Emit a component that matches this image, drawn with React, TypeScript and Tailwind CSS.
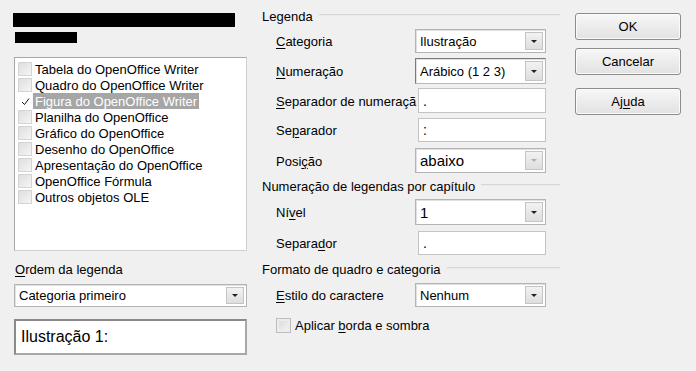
import React from "react";

const font = "font-['Liberation_Sans',Arial,sans-serif]";

function Mn({ children }: { children: React.ReactNode }) {
  return <span className="underline underline-offset-[2px] decoration-[1px]">{children}</span>;
}

function Box() {
  return (
    <span className="w-[14px] h-[14px] shrink-0 border border-[#d4d4d4] bg-gradient-to-br from-[#dedede] to-[#f6f6f6]" />
  );
}

function Arrow({ disabled }: { disabled?: boolean }) {
  return (
    <span className="w-[18px] self-stretch m-[2px] ml-0 flex items-center justify-center border border-[#c4c4c4] bg-gradient-to-b from-[#f2f2f2] to-[#dedede]">
      <span
        className={`w-0 h-0 border-l-[3px] border-r-[3px] border-t-[3px] border-l-transparent border-r-transparent ${
          disabled ? "border-t-[#b0b0b0]" : "border-t-[#202020]"
        }`}
      />
    </span>
  );
}

function Select({
  value,
  h = "h-[24px]",
  w = "w-[131px]",
  size = "text-[13px]",
  disabled,
  focus,
}: {
  value: string;
  h?: string;
  w?: string;
  size?: string;
  disabled?: boolean;
  focus?: boolean;
}) {
  return (
    <div
      className={`${w} ${h} flex items-stretch bg-white border ${
        focus ? "border-[#7a7a7a] border-b-[#b8b8b8] border-r-[#b8b8b8]" : "border-[#b4b4b4]"
      } shadow-[inset_1px_1px_0_#e0e0e0]`}
    >
      <span className={`flex-1 flex items-center pl-[4px] ${size} leading-none text-black whitespace-nowrap overflow-hidden`}>
        {value}
      </span>
      <Arrow disabled={disabled} />
    </div>
  );
}

function Input({ value, h = "h-[24px]" }: { value: string; h?: string }) {
  return (
    <div className={`ml-[3px] w-[128px] ${h} flex items-center pl-[4px] bg-white border border-[#c4c4c4] text-[14px] leading-none`}>
      {value}
    </div>
  );
}

function Header({ children }: { children: React.ReactNode }) {
  return (
    <div className="flex items-center h-[16px]">
      <span className="text-[13px] leading-none whitespace-nowrap">{children}</span>
      <span className="flex-1 ml-[6px] h-[2px] bg-[#d6d6d6] border-b border-b-[#ececec] -mt-[2px]" />
    </div>
  );
}

function Row({
  label,
  children,
  mt,
  h,
}: {
  label: React.ReactNode;
  children: React.ReactNode;
  mt: string;
  h: string;
}) {
  return (
    <div className={`${mt} ${h} flex items-center pl-[14px]`}>
      <span className="w-[139px] shrink-0 whitespace-nowrap text-[13px] leading-[16px] pt-[2px]">
        {label}
      </span>
      {children}
    </div>
  );
}

const items = [
  "Tabela do OpenOffice Writer",
  "Quadro do OpenOffice Writer",
  "Figura do OpenOffice Writer",
  "Planilha do OpenOffice",
  "Gráfico do OpenOffice",
  "Desenho do OpenOffice",
  "Apresentação do OpenOffice",
  "OpenOffice Fórmula",
  "Outros objetos OLE",
];

function Button({ children, mt }: { children: React.ReactNode; mt: string }) {
  return (
    <div
      className={`${mt} w-[106px] h-[27px] flex items-center justify-center rounded-[3px] border border-[#8c8c8c] bg-gradient-to-b from-[#f7f7f7] to-[#e2e2e2] shadow-[inset_0_0_0_1px_#fbfbfb] text-[13px] leading-none`}
    >
      {children}
    </div>
  );
}

export default function App() {
  return (
    <div className={`${font} w-[696px] h-[371px] bg-[#f0f0f0] text-black flex overflow-hidden`}>
      {/* left column */}
      <div className="w-[234px] ml-[13px] pt-[13px] flex flex-col shrink-0">
        <div className="w-[222px] h-[14px] bg-black" />
        <div className="mt-[5px] ml-[2px] w-[62px] h-[11px] bg-black" />
        <div className="mt-[14px] ml-[1px] w-[233px] h-[194px] bg-white border border-[#a8a8a8] border-r-[#d0d0d0] border-b-[#d0d0d0] pt-[3px]">
          {items.map((it, i) => (
            <div key={it} className="h-[16px] flex items-center pl-[3px]">
              {i === 2 ? (
                <span className="w-[14px] h-[14px] shrink-0 flex items-center justify-center">
                  <svg width="9" height="9" viewBox="0 0 9 9">
                    <path d="M1 5 L3.5 7.5 L8 1.5" fill="none" stroke="#111" strokeWidth="1" />
                  </svg>
                </span>
              ) : (
                <Box />
              )}
              <span
                className={`ml-[1px] px-[2px] h-[16px] flex items-center text-[13px] leading-none whitespace-nowrap ${
                  i === 2 ? "bg-[#a6a6a6] text-white" : ""
                }`}
              >
                {it}
              </span>
            </div>
          ))}
        </div>
        <div className="mt-[11px] h-[16px] ml-[2px] text-[13px] leading-[16px]">
          <Mn>O</Mn>rdem da legenda
        </div>
        <div className="mt-[6px] ml-[1px]">
          <Select value="Categoria primeiro" w="w-[233px]" h="h-[23px]" />
        </div>
        <div className="mt-[12px] ml-[1px] w-[233px] h-[36px] bg-white border-2 border-[#8a8a8a] border-r-[#a8a8a8] border-b-[#a8a8a8] flex items-center pl-[5px] text-[16px] leading-none">
          Ilustração 1:
        </div>
      </div>

      {/* middle column */}
      <div className="w-[298px] ml-[15px] pt-[8px] flex flex-col shrink-0">
        <Header>Legenda</Header>
        <Row mt="mt-[5px]" h="h-[24px]" label={<><Mn>C</Mn>ategoria</>}>
          <Select value="Ilustração" />
        </Row>
        <Row mt="mt-[5px]" h="h-[26px]" label={<><Mn>N</Mn>umeração</>}>
          <Select value="Arábico (1 2 3)" h="h-[26px]" focus />
        </Row>
        <Row mt="mt-[4px]" h="h-[25px]" label={<><Mn>S</Mn>eparador de numeraçã</>}>
          <Input value="." h="h-[25px]" />
        </Row>
        <Row mt="mt-[5px]" h="h-[24px]" label={<>Se<Mn>p</Mn>arador</>}>
          <Input value=":" />
        </Row>
        <Row mt="mt-[6px]" h="h-[25px]" label={<>Posi<Mn>ç</Mn>ão</>}>
          <Select value="abaixo" h="h-[25px]" size="text-[15px]" disabled />
        </Row>
        <div className="mt-[5px]">
          <Header>Numeração de legendas por capítulo</Header>
        </div>
        <Row mt="mt-[5px]" h="h-[26px]" label={<>Ní<Mn>v</Mn>el</>}>
          <Select value="1" h="h-[26px]" size="text-[15px]" />
        </Row>
        <Row mt="mt-[6px]" h="h-[24px]" label={<>Separa<Mn>d</Mn>or</>}>
          <Input value="." />
        </Row>
        <div className="mt-[6px]">
          <Header>Formato de quadro e categoria</Header>
        </div>
        <Row mt="mt-[6px]" h="h-[24px]" label={<><Mn>E</Mn>stilo do caractere</>}>
          <Select value="Nenhum" />
        </Row>
        <div className="mt-[10px] pl-[14px] h-[16px] flex items-center">
          <span className="w-[15px] h-[15px] border border-[#bdbdbd] bg-gradient-to-br from-[#d9d9d9] to-[#f6f6f6] shadow-[inset_0_0_0_2px_#ececec]" />
          <span className="ml-[4px] text-[13px] leading-none">
            Aplicar <Mn>b</Mn>orda e sombra
          </span>
        </div>
      </div>

      {/* buttons */}
      <div className="ml-[15px] pt-[13px] flex flex-col shrink-0">
        <Button mt="mt-0">OK</Button>
        <Button mt="mt-[8px]">Cancelar</Button>
        <Button mt="mt-[13px]">
          <span>
            Aj<Mn>u</Mn>da
          </span>
        </Button>
      </div>
    </div>
  );
}
